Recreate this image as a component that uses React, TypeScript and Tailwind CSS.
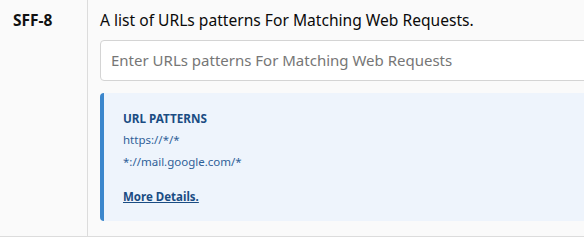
import React from "react";

export default function App() {
  return (
    <div className="w-[584px] h-[240px] bg-white overflow-hidden" style={{ fontFamily: '"Noto Sans", "Open Sans", sans-serif' }}>
      <div className="flex h-[237px] bg-[#fafafa] border-b border-[#dcdcdc]">
        <div className="w-[88px] shrink-0 border-r border-[#dcdcdc] pl-[13px] pt-[8px]">
          <span className="text-[15.5px] font-bold text-[#111]">SFF-8</span>
        </div>
        <div className="flex-1 min-w-0 pl-[12px] pt-[9px]">
          <div className="text-[15.6px] font-normal text-[#0a0a0a] leading-[22px] whitespace-nowrap">
            A list of URLs patterns For Matching Web Requests.
          </div>
          <div className="mt-[9px] h-[41px] w-[520px] bg-white border border-[#d4d4d4] rounded-[4px] flex items-center pl-[10px]">
            <span className="text-[15px] text-[#767676] whitespace-nowrap">Enter URLs patterns For Matching Web Requests</span>
          </div>
          <div className="mt-[12px] h-[128px] w-[520px] bg-[#eef4fc] border-l-[4px] border-[#3b86cc] rounded-l-[4px] pl-[19px] pt-[16px]">
            <div className="text-[11.7px] font-bold text-[#1a4c83] leading-[18px]">URL PATTERNS</div>
            <div className="mt-[4px] text-[11.5px] text-[#2e5f98] leading-[18px]">https://*/*</div>
            <div className="mt-[4px] text-[11.5px] text-[#2e5f98] leading-[18px]">*://mail.google.com/*</div>
            <div className="mt-[17px] text-[11.5px] font-bold text-[#1a4c83] underline leading-[18px]">More Details.</div>
          </div>
        </div>
      </div>
    </div>
  );
}
